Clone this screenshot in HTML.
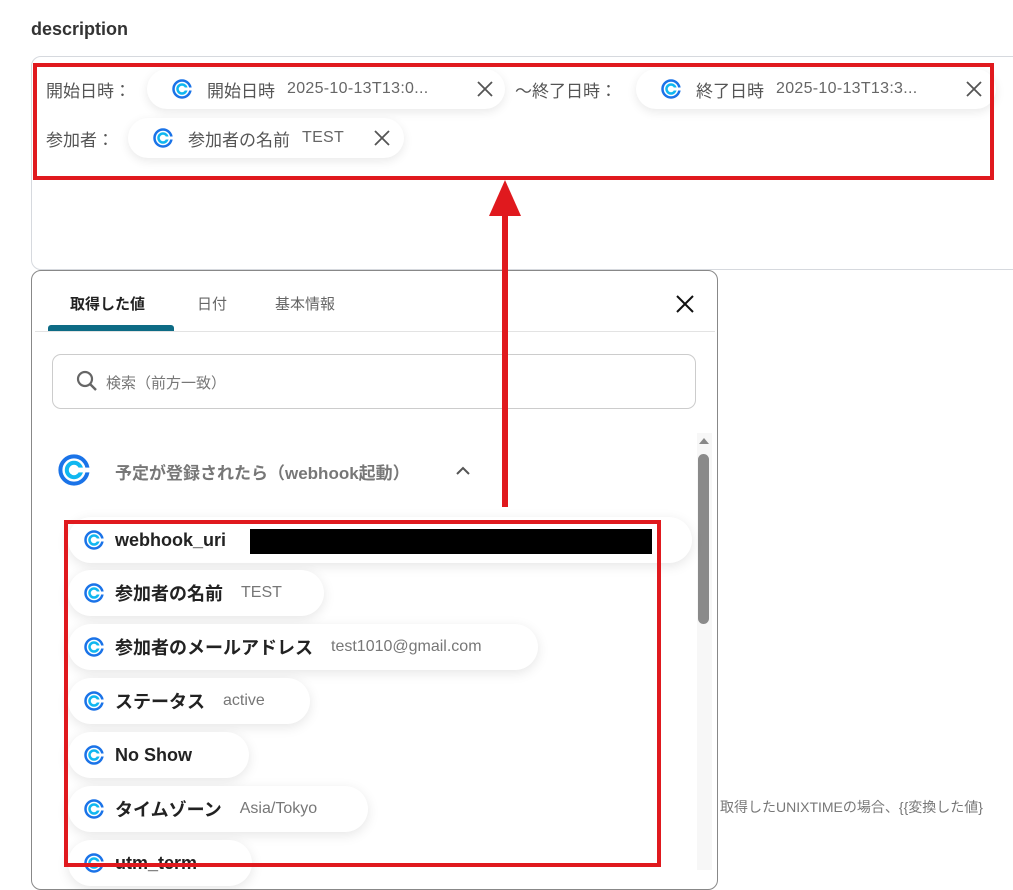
<!DOCTYPE html>
<html><head><meta charset="utf-8"><style>
*{box-sizing:border-box;margin:0;padding:0}
body{width:1013px;height:870px;overflow:hidden;background:#fff;position:relative;font-family:"Liberation Sans","Noto Sans CJK JP",sans-serif;color:#333}
.a{position:absolute}
.pill{position:absolute;background:#fff;border-radius:22px;box-shadow:0 3px 10px rgba(0,0,0,.09);display:flex;align-items:center;white-space:nowrap}
.ic{width:20px;height:20px;flex:none}
.lbl{font-size:17px;color:#555}
.val{font-size:16px;color:#666;margin-left:12px;letter-spacing:.3px}
.x{position:absolute;right:12px;top:12px}
.it{position:absolute;left:68px;height:46px;background:#fff;border-radius:23px;box-shadow:0 3px 12px rgba(0,0,0,.10);display:flex;align-items:center;padding-left:16px;white-space:nowrap}
.it b{font-size:18px;color:#222;margin-left:11px}
.it span{font-size:16px;color:#777;margin-left:18px}
</style></head><body>
<svg width="0" height="0" style="position:absolute"><defs>
<symbol id="c" viewBox="0 0 20 20"><circle cx="10" cy="10" r="8.5" fill="none" stroke="#1a73e8" stroke-width="2.5"/><circle cx="10" cy="10" r="4.5" fill="none" stroke="#10b7f0" stroke-width="2.5"/><rect x="12" y="8.5" width="8" height="3" fill="#fff"/></symbol>
<symbol id="x" viewBox="0 0 16 16"><path d="M1 1L15 15M15 1L1 15" stroke="#555" stroke-width="1.8"/></symbol>
</defs></svg>

<div class="a" style="left:31px;top:19px;font-size:18px;font-weight:bold;color:#333">description</div>
<div class="a" style="left:31px;top:56px;width:1000px;height:214px;border:1px solid #d6d9de;border-radius:10px"></div>

<div class="a lbl" style="left:46px;top:77px">開始日時：</div>
<div class="pill" style="left:147px;top:69px;width:358px;height:40px;padding-left:25px"><svg class="ic"><use href="#c"/></svg><span class="lbl" style="margin-left:15px">開始日時</span><span class="val">2025-10-13T13:0...</span><svg class="x" width="16" height="16"><use href="#x"/></svg></div>
<div class="a lbl" style="left:515px;top:77px">〜終了日時：</div>
<div class="pill" style="left:636px;top:69px;width:360px;height:40px;padding-left:25px"><svg class="ic"><use href="#c"/></svg><span class="lbl" style="margin-left:15px">終了日時</span><span class="val">2025-10-13T13:3...</span><svg class="x" style="right:14px" width="16" height="16"><use href="#x"/></svg></div>
<div class="a lbl" style="left:46px;top:126px">参加者：</div>
<div class="pill" style="left:128px;top:118px;width:276px;height:40px;padding-left:25px"><svg class="ic"><use href="#c"/></svg><span class="lbl" style="margin-left:15px">参加者の名前</span><span class="val">TEST</span><svg class="x" style="right:14px" width="16" height="16"><use href="#x"/></svg></div>

<div class="a" style="left:33px;top:63px;width:961px;height:117px;border:4px solid #e0191e"></div>

<div class="a" style="left:31px;top:270px;width:687px;height:620px;border:1px solid #888;border-radius:10px;background:#fff"></div>
<div class="a" style="left:70px;top:293px;font-size:15px;font-weight:bold;color:#222">取得した値</div>
<div class="a" style="left:197px;top:293px;font-size:15px;color:#666">日付</div>
<div class="a" style="left:275px;top:293px;font-size:15px;color:#666">基本情報</div>
<div class="a" style="left:48px;top:325px;width:126px;height:6px;background:#0d6b85;border-radius:3px 3px 0 0"></div>
<div class="a" style="left:35px;top:331px;width:680px;height:1px;background:#e3e3e3"></div>
<svg class="a" style="left:675px;top:294px" width="20" height="20"><path d="M2 2L18 18M18 2L2 18" stroke="#111" stroke-width="2"/></svg>
<div class="a" style="left:52px;top:354px;width:644px;height:55px;border:1px solid #ccc;border-radius:9px"></div>
<svg class="a" style="left:76px;top:370px" width="22" height="22"><circle cx="9" cy="9" r="7" fill="none" stroke="#666" stroke-width="2.2"/><path d="M14 14L20 20" stroke="#666" stroke-width="2.4"/></svg>
<div class="a" style="left:106px;top:372px;font-size:15px;color:#777">検索（前方一致）</div>

<svg class="a" style="left:58px;top:454px" width="32" height="32" viewBox="0 0 20 20"><use href="#c"/></svg>
<div class="a" style="left:115px;top:459px;font-size:17px;color:#777;font-weight:bold">予定が登録されたら（webhook起動）</div>
<svg class="a" style="left:455px;top:465px" width="16" height="12"><path d="M2 9L8 3L14 9" fill="none" stroke="#555" stroke-width="2"/></svg>

<div class="a" style="left:697px;top:433px;width:15px;height:437px;background:#f7f7f7"></div>
<svg class="a" style="left:697px;top:436px" width="14" height="10"><path d="M2 8L7 2L12 8Z" fill="#888"/></svg>
<div class="a" style="left:698px;top:454px;width:11px;height:170px;background:#8a8a8a;border-radius:6px"></div>

<div class="it" style="top:517px;width:624px"><svg class="ic"><use href="#c"/></svg><b>webhook_uri</b></div>
<div class="a" style="left:250px;top:529px;width:402px;height:25px;background:#000"></div>
<div class="it" style="top:570px;width:256px"><svg class="ic"><use href="#c"/></svg><b>参加者の名前</b><span>TEST</span></div>
<div class="it" style="top:624px;width:470px"><svg class="ic"><use href="#c"/></svg><b>参加者のメールアドレス</b><span>test1010@gmail.com</span></div>
<div class="it" style="top:678px;width:242px"><svg class="ic"><use href="#c"/></svg><b>ステータス</b><span>active</span></div>
<div class="it" style="top:732px;width:181px"><svg class="ic"><use href="#c"/></svg><b>No Show</b></div>
<div class="it" style="top:786px;width:300px"><svg class="ic"><use href="#c"/></svg><b>タイムゾーン</b><span>Asia/Tokyo</span></div>
<div class="it" style="top:840px;width:184px"><svg class="ic"><use href="#c"/></svg><b>utm_term</b></div>

<div class="a" style="left:64px;top:520px;width:597px;height:347px;border:4px solid #e0191e"></div>

<div class="a" style="left:502px;top:212px;width:6px;height:295px;background:#e0191e"></div>
<svg class="a" style="left:488px;top:180px" width="34" height="36"><path d="M17 0L33 36H1Z" fill="#e0191e"/></svg>

<div class="a" style="left:720px;top:797px;font-size:14px;color:#777;white-space:nowrap">取得したUNIXTIMEの場合、{{変換した値}</div>
</body></html>
